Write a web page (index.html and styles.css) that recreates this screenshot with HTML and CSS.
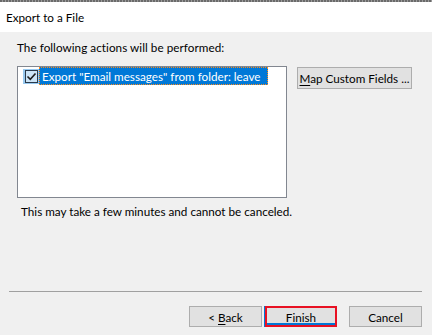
FILE: index.html
```html
<!DOCTYPE html>
<html>
<head>
<meta charset="utf-8">
<link rel="stylesheet" href="styles.css">
</head>
<body>
<div class="dialog">
  <div class="topline"></div>
  <div class="header"><span class="title">Export to a File</span></div>
  <div class="content">
    <div class="label">The following actions will be performed:</div>
    <div class="main-row">
      <div class="listbox">
        <div class="item">
          <span class="chk-wrap">
            <span class="chk">
              <svg width="11" height="11" viewBox="0 0 11 11"><path d="M1.5 5.5 L4.3 8.3 L9.5 2.5" fill="none" stroke="#1e1e1e" stroke-width="1.6"/></svg>
            </span>
          </span>
          <span class="sel">Export "Email messages" from folder: leave</span>
        </div>
      </div>
      <button class="btn map"><u>M</u>ap Custom Fields ...</button>
    </div>
    <div class="note">This may take a few minutes and cannot be canceled.</div>
  </div>
  <div class="separator"></div>
  <div class="footer">
    <button class="btn nav">&lt; <u>B</u>ack</button>
    <button class="btn nav finish">Finish</button>
    <button class="btn nav cancel">Cancel</button>
  </div>
</div>
</body>
</html>
```
FILE: styles.css
```css
html, body {
  margin: 0;
  padding: 0;
}
body {
  width: 432px;
  height: 335px;
  background: #f0f0f0;
  font-family: "Lato", "Noto Sans", sans-serif;
  font-size: 11.7px;
  color: #000;
  overflow: hidden;
}
.dialog {
  display: flex;
  flex-direction: column;
  height: 335px;
}
.topline {
  height: 2px;
  background: repeating-linear-gradient(90deg, #6a6a6a 0 2px, #9a9a9a 2px 3px);
}
.header {
  height: 30px;
  background: #fff;
  display: flex;
  align-items: center;
  padding-left: 6px;
}
.title {
  margin-top: -1px;
}
.content {
  padding-left: 17px;
}
.label {
  margin-top: 8px;
  line-height: 15px;
  letter-spacing: 0.05px;
}
.main-row {
  display: flex;
  align-items: flex-start;
  margin-top: 11px;
}
.listbox {
  width: 263px;
  height: 130px;
  border: 1px solid #828790;
  background: #fff;
  padding: 0 0 0 5px;
}
.item {
  display: flex;
  align-items: flex-start;
  height: 18px;
}
.chk-wrap {
  width: 16px;
  height: 15px;
  background: #99c9ef;
  display: flex;
  align-items: center;
  justify-content: center;
  margin-top: 2px;
}
.chk {
  width: 11px;
  height: 11px;
  border: 1px solid #2b3a4a;
  background: #cce4f7;
  display: flex;
}
.sel {
  background: #0078d7;
  color: #fff;
  height: 16px;
  line-height: 16px;
  padding: 0 6px 0 2px;
  border: 1px dotted #ff8c1a;
  white-space: nowrap;
}
.btn {
  font-family: inherit;
  font-size: 11.7px;
  background: #e1e1e1;
  border: 1px solid #adadad;
  color: #000;
  padding: 0;
  margin: 0;
  box-sizing: border-box;
  white-space: nowrap;
  cursor: default;
}
.btn u {
  text-decoration: underline;
  text-underline-offset: 2px;
}
.map {
  width: 115px;
  height: 22px;
  margin-left: 10px;
  margin-top: 1px;
}
.note {
  margin-top: 6px;
  padding-left: 4px;
  line-height: 15px;
}
.separator {
  margin-top: auto;
  margin-left: 9px;
  margin-right: 10px;
  height: 1px;
  background: #a0a0a0;
}
.footer {
  display: flex;
  justify-content: flex-end;
  padding: 14px 10px 8px 0;
}
.nav {
  width: 73px;
  height: 21px;
}
.finish {
  margin-left: 3px;
  width: 72px;
  border: 2px solid #e81123;
  box-shadow: -1px 0 0 #0078d7, inset 0 -2px 0 #0078d7;
}
.cancel {
  margin-left: 12px;
}
```
